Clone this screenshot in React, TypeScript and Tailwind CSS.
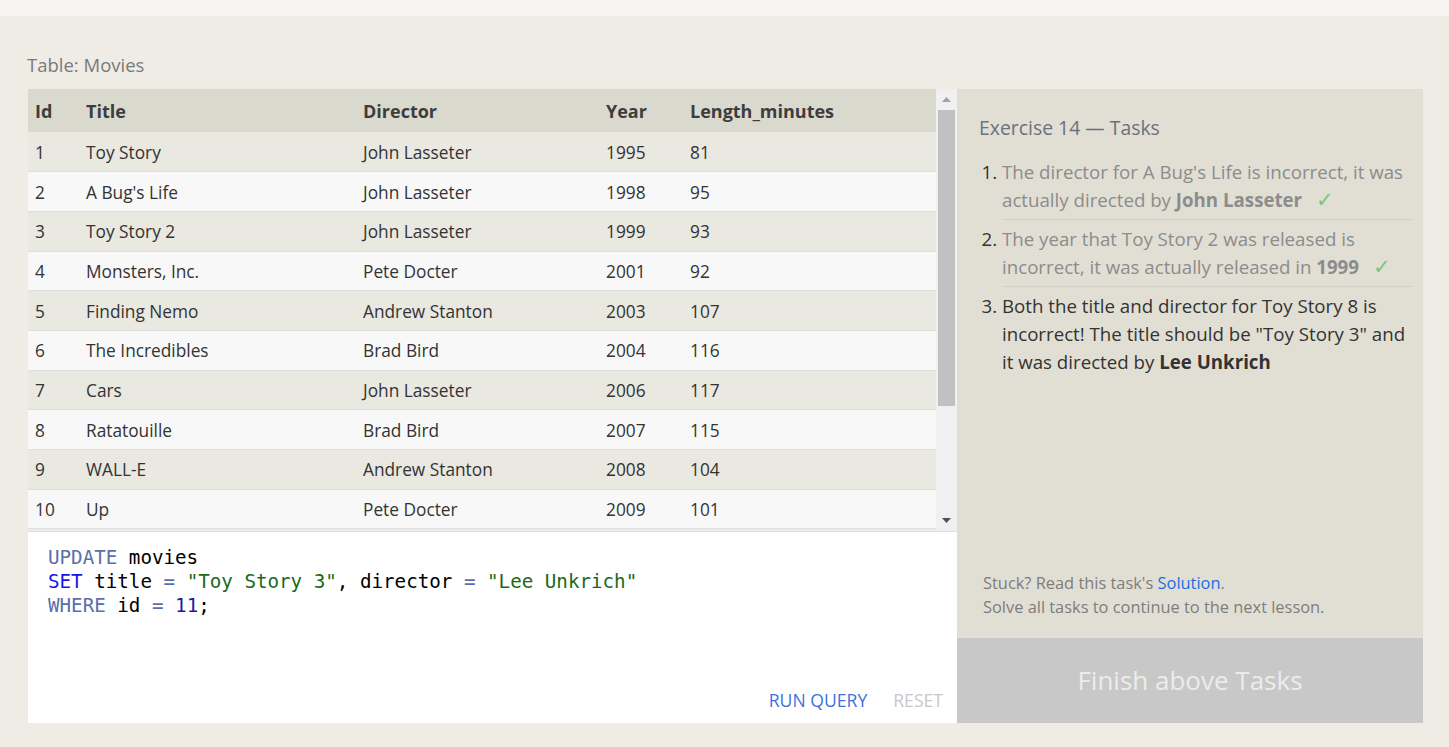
import React from "react";

const rows: [number, string, string, number, number][] = [
  [1, "Toy Story", "John Lasseter", 1995, 81],
  [2, "A Bug's Life", "John Lasseter", 1998, 95],
  [3, "Toy Story 2", "John Lasseter", 1999, 93],
  [4, "Monsters, Inc.", "Pete Docter", 2001, 92],
  [5, "Finding Nemo", "Andrew Stanton", 2003, 107],
  [6, "The Incredibles", "Brad Bird", 2004, 116],
  [7, "Cars", "John Lasseter", 2006, 117],
  [8, "Ratatouille", "Brad Bird", 2007, 115],
  [9, "WALL-E", "Andrew Stanton", 2008, 104],
  [10, "Up", "Pete Docter", 2009, 101],
];

const sans = "font-['Open_Sans','Noto_Sans',sans-serif]";

export default function App() {
  return (
    <div className={`min-h-[747px] bg-[#efece5] ${sans}`}>
      <div className="h-4 bg-[#f6f5f1]" />
      <div className="pl-[28px] pr-[25px] pt-[37px] pb-[24px]">
        <div className="text-[18.5px] text-[#7a7a7a] leading-[24px] -ml-px">Table: Movies</div>
        <div className="mt-[12px] flex h-[634px]">
          {/* left column */}
          <div className="flex w-[929px] flex-col">
            <div className="flex h-[443px] border-b border-[#e0ded6]">
              <div className="flex-1 overflow-hidden">
                <table className="w-full table-fixed border-collapse text-[#333]">
                  <colgroup>
                    <col className="w-[51px]" />
                    <col className="w-[277px]" />
                    <col className="w-[243px]" />
                    <col className="w-[84px]" />
                    <col />
                  </colgroup>
                  <thead>
                    <tr className="h-[43px] bg-[#dad9ce] text-left text-[18px] font-bold text-[#3d3d3d]">
                      <th className="pl-[7px] pt-[2px]">Id</th>
                      <th className="pl-[7px] pt-[2px]">Title</th>
                      <th className="pl-[7px] pt-[2px]">Director</th>
                      <th className="pl-[7px] pt-[2px]">Year</th>
                      <th className="pl-[7px] pt-[2px]">Length_minutes</th>
                    </tr>
                  </thead>
                  <tbody className="text-[17.3px]">
                    {rows.map((r, i) => (
                      <tr
                        key={r[0]}
                        className={`h-[39.7px] border-b border-[#dedede] ${i % 2 === 0 ? "bg-[#e9e8e1]" : "bg-[#f8f8f8]"}`}
                      >
                        <td className="pl-[7px] pt-[2px]">{r[0]}</td>
                        <td className="pl-[7px] pt-[2px]">{r[1]}</td>
                        <td className="pl-[7px] pt-[2px]">{r[2]}</td>
                        <td className="pl-[7px] pt-[2px]">{r[3]}</td>
                        <td className="pl-[7px] pt-[2px]">{r[4]}</td>
                      </tr>
                    ))}
                  </tbody>
                </table>
              </div>
              {/* scrollbar */}
              <div className="flex w-[21px] flex-col items-center bg-[#f0f0f0]">
                <div className="flex h-[21px] items-center justify-center">
                  <svg width="9" height="5" viewBox="0 0 9 5"><path d="M4.5 0L9 5H0z" fill="#a3a3a3" /></svg>
                </div>
                <div className="h-[296px] w-[17px] bg-[#c1c1c1]" />
                <div className="flex-1" />
                <div className="flex h-[21px] items-center justify-center">
                  <svg width="9" height="5" viewBox="0 0 9 5"><path d="M0 0H9L4.5 5z" fill="#505050" /></svg>
                </div>
              </div>
            </div>
            {/* editor */}
            <div className="flex flex-1 flex-col bg-white">
              <pre className="pl-[20px] pt-[14px] font-['DejaVu_Sans_Mono','Liberation_Mono',monospace] text-[19.2px] leading-[24px] text-black">
                <span className="text-[#5a6fa8]">UPDATE</span> movies{"\n"}
                <span className="text-[#1515f0]">SET</span> title <span className="text-[#5a6fa8]">=</span>{" "}
                <span className="text-[#1a6a1a]">"Toy Story 3"</span>, director <span className="text-[#5a6fa8]">=</span>{" "}
                <span className="text-[#1a6a1a]">"Lee Unkrich"</span>{"\n"}
                <span className="text-[#5a6fa8]">WHERE</span> id <span className="text-[#5a6fa8]">=</span>{" "}
                <span className="text-[#1a1aa6]">11</span>;
              </pre>
              <div className="flex-1" />
              <div className="flex justify-end gap-[26px] pr-[14px] pb-[12px] text-[17.6px] leading-[22px]">
                <span className="text-[#3d72dd]">RUN QUERY</span>
                <span className="text-[#c8c8c8]">RESET</span>
              </div>
            </div>
          </div>
          {/* right panel */}
          <div className="flex w-[466px] flex-col bg-[#e1dfd4]">
            <div className="pl-[22px] pr-[11px] pt-[26px]">
              <div className="text-[19.4px] leading-[26px] text-[#69727d]">Exercise 14 — Tasks</div>
              <ol className="mt-[17px] list-decimal pl-[23px] text-[18.7px] leading-[28px] marker:text-[#333]">
                <li className="border-b border-[#d3d1c6] pb-[5px] text-[#8c8c8c]">
                  The director for A Bug's Life is incorrect, it was actually directed by{" "}
                  <b className="font-bold">John Lasseter</b>
                  <span className="ml-[14px] text-[21px] leading-[20px] text-[#7bc47f]">✓</span>
                </li>
                <li className="border-b border-[#d3d1c6] pt-[5px] pb-[5px] text-[#8c8c8c]">
                  The year that Toy Story 2 was released is incorrect, it was actually released in{" "}
                  <b className="font-bold">1999</b>
                  <span className="ml-[14px] text-[21px] leading-[20px] text-[#7bc47f]">✓</span>
                </li>
                <li className="pt-[5px] text-[#333]">
                  Both the title and director for Toy Story 8 is incorrect! The title should be "Toy Story 3" and it
                  was directed by <b className="font-bold">Lee Unkrich</b>
                </li>
              </ol>
            </div>
            <div className="flex-1" />
            <div className="pl-[26px] pb-[19px] text-[16.4px] leading-[24px] text-[#7d7d7d]">
              <div>
                Stuck? Read this task's <span className="text-[#1a6fdf]">Solution</span>.
              </div>
              <div>Solve all tasks to continue to the next lesson.</div>
            </div>
            <div className="flex h-[85px] items-center justify-center bg-[#c8c8c8] text-[26px] text-[#ececec]">
              Finish above Tasks
            </div>
          </div>
        </div>
      </div>
    </div>
  );
}
